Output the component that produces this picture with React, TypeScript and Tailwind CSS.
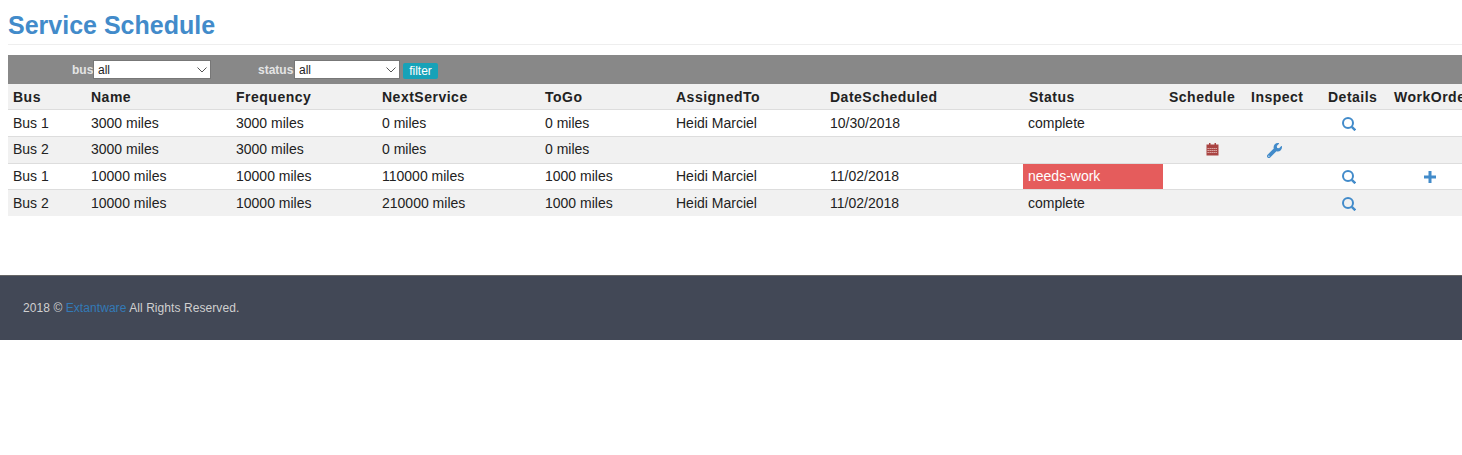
import React from 'react';
import { FaWrench } from 'react-icons/fa';

interface Row {
  bus: string;
  name: string;
  frequency: string;
  next: string;
  toGo: string;
  assigned: string;
  date: string;
  status: string;
  canSchedule?: boolean;
  canDetail?: boolean;
  canOrder?: boolean;
}

const rows: Row[] = [
  { bus: 'Bus 1', name: '3000 miles', frequency: '3000 miles', next: '0 miles', toGo: '0 miles', assigned: 'Heidi Marciel', date: '10/30/2018', status: 'complete', canDetail: true },
  { bus: 'Bus 2', name: '3000 miles', frequency: '3000 miles', next: '0 miles', toGo: '0 miles', assigned: '', date: '', status: '', canSchedule: true },
  { bus: 'Bus 1', name: '10000 miles', frequency: '10000 miles', next: '110000 miles', toGo: '1000 miles', assigned: 'Heidi Marciel', date: '11/02/2018', status: 'needs-work', canDetail: true, canOrder: true },
  { bus: 'Bus 2', name: '10000 miles', frequency: '10000 miles', next: '210000 miles', toGo: '1000 miles', assigned: 'Heidi Marciel', date: '11/02/2018', status: 'complete', canDetail: true },
];

const headers = ['Bus', 'Name', 'Frequency', 'NextService', 'ToGo', 'AssignedTo', 'DateScheduled', 'Status', 'Schedule', 'Inspect', 'Details', 'WorkOrder'];
const nudged = ['Status', 'Schedule', 'Inspect', 'WorkOrder'];

const SearchIcon = () => (
  <svg width="14" height="14" viewBox="0 0 14 14" fill="none" className="block ml-[14px] mt-[1px] text-[#428bca]">
    <circle cx="6" cy="6" r="5" stroke="currentColor" strokeWidth="2" />
    <path d="M9.800 9.800l3.500 3.500" stroke="currentColor" strokeWidth="2.400" />
  </svg>
);

const CalendarIcon = () => (
  <svg width="13" height="13" viewBox="0 0 13 13" className="block ml-[38px] text-[#a94442]">
    <path d="M3 0h1.500v1.500H8.500V0H10v1.500h2.500v11H.5v-11H3z" fill="currentColor" />
    <path d="M1.500 5.500h10M1.500 7.500h10M1.500 9.500h10" stroke="#f1d9d9" strokeWidth="0.8" strokeDasharray="1.300 0.700" />
  </svg>
);

const PlusIcon = () => (
  <svg width="12" height="12" viewBox="0 0 12 12" className="block ml-[31px] mt-[2px] text-[#428bca]">
    <path d="M4.500 0h3v4.500H12v3H7.500V12h-3V7.500H0v-3h4.500z" fill="currentColor" />
  </svg>
);

const Chevron = () => (
  <svg width="10" height="6" viewBox="0 0 10 6" fill="none" className="absolute right-[4px] top-[7px] text-[#555] pointer-events-none">
    <path d="M.5 .5L5 5l4.500-4.500" stroke="currentColor" strokeWidth="1" />
  </svg>
);

const App: React.FC = () => {
  return (
    <div className="min-h-[455px] bg-white text-[14px] text-[#222] font-['Liberation_Sans',Arial,sans-serif] overflow-hidden">
      <div className="pl-2">
        <h1 className="h-[45px] pt-[10px] border-b border-[#eee] text-[25px] leading-[30px] font-bold text-[#428bca]">Service Schedule</h1>

        <div className="mt-[10px] h-[29px] bg-[#888888] flex items-center pl-[64px] text-[12px] font-bold text-[#e4e4e4]">
          <label className="w-[21px]">bus</label>
          <div className="relative w-[118px] h-[19px]">
            <select className="appearance-none w-full h-full pl-[4px] bg-white border border-[#777] text-[12px] font-normal text-[#222]">
              <option>all</option>
            </select>
            <Chevron />
          </div>
          <label className="ml-[47px] w-[36px]">status</label>
          <div className="relative w-[106px] h-[19px]">
            <select className="appearance-none w-full h-full pl-[4px] bg-white border border-[#777] text-[12px] font-normal text-[#222]">
              <option>all</option>
            </select>
            <Chevron />
          </div>
          <button className="ml-[3px] mt-[3px] w-[35px] h-[16px] rounded-[2px] bg-[#17a2b8] text-[12px] leading-[16px] font-normal text-white">filter</button>
        </div>

        <table className="table-fixed w-[1540px] border-collapse">
          <colgroup>
            <col className="w-[78px]" />
            <col className="w-[145px]" />
            <col className="w-[146px]" />
            <col className="w-[163px]" />
            <col className="w-[131px]" />
            <col className="w-[154px]" />
            <col className="w-[198px]" />
            <col className="w-[140px]" />
            <col className="w-[82px]" />
            <col className="w-[78px]" />
            <col className="w-[65px]" />
            <col className="w-[160px]" />
          </colgroup>
          <thead>
            <tr className="h-[25px] bg-[#f1f1f1] border-b border-[#ddd]">
              {headers.map((h) => (
                <th key={h} className={`pt-[2px] pr-[5px] text-left text-[14px] font-bold tracking-[0.5px] text-[#222] ${nudged.includes(h) ? 'pl-[6px]' : 'pl-[5px]'}`}>{h}</th>
              ))}
            </tr>
          </thead>
          <tbody>
            {rows.map((r, i) => (
              <tr key={i} className={`border-b border-[#ddd] last:border-b-0 ${i % 2 === 1 ? 'bg-[#f1f1f1]' : 'bg-white'} ${i === 2 ? 'h-[26px]' : 'h-[27px]'} ${i === 0 || i === 3 ? '[&>td]:pt-[2px]' : ''}`}>
                <td className="px-[5px]">{r.bus}</td>
                <td className="px-[5px]">{r.name}</td>
                <td className="px-[5px]">{r.frequency}</td>
                <td className="px-[5px]">{r.next}</td>
                <td className="px-[5px]">{r.toGo}</td>
                <td className="px-[5px]">{r.assigned}</td>
                <td className="px-[5px]">{r.date}</td>
                <td className={r.status === 'needs-work' ? 'px-[5px] bg-[#e55c5c] text-white' : 'px-[5px]'}>{r.status}</td>
                <td className="px-[5px]">
                  {r.canSchedule && <CalendarIcon />}
                </td>
                <td className="px-[5px]">
                  {r.canSchedule && <FaWrench className="ml-[17px] mt-[1px] text-[15px] text-[#428bca]" />}
                </td>
                <td className="px-[5px]">
                  {r.canDetail && <SearchIcon />}
                </td>
                <td className="px-[5px]">
                  {r.canOrder && <PlusIcon />}
                </td>
              </tr>
            ))}
          </tbody>
        </table>
      </div>

      <footer className="mt-[59px] h-[65px] bg-[#424856] border-t border-[#666] pl-[23px] flex items-center text-[12px] tracking-[0.07px] text-[#d0d0d0]">
        <span>
          2018 © <a href="#" className="text-[#337ab7]">Extantware</a> All Rights Reserved.
        </span>
      </footer>
    </div>
  );
};

export default App;
